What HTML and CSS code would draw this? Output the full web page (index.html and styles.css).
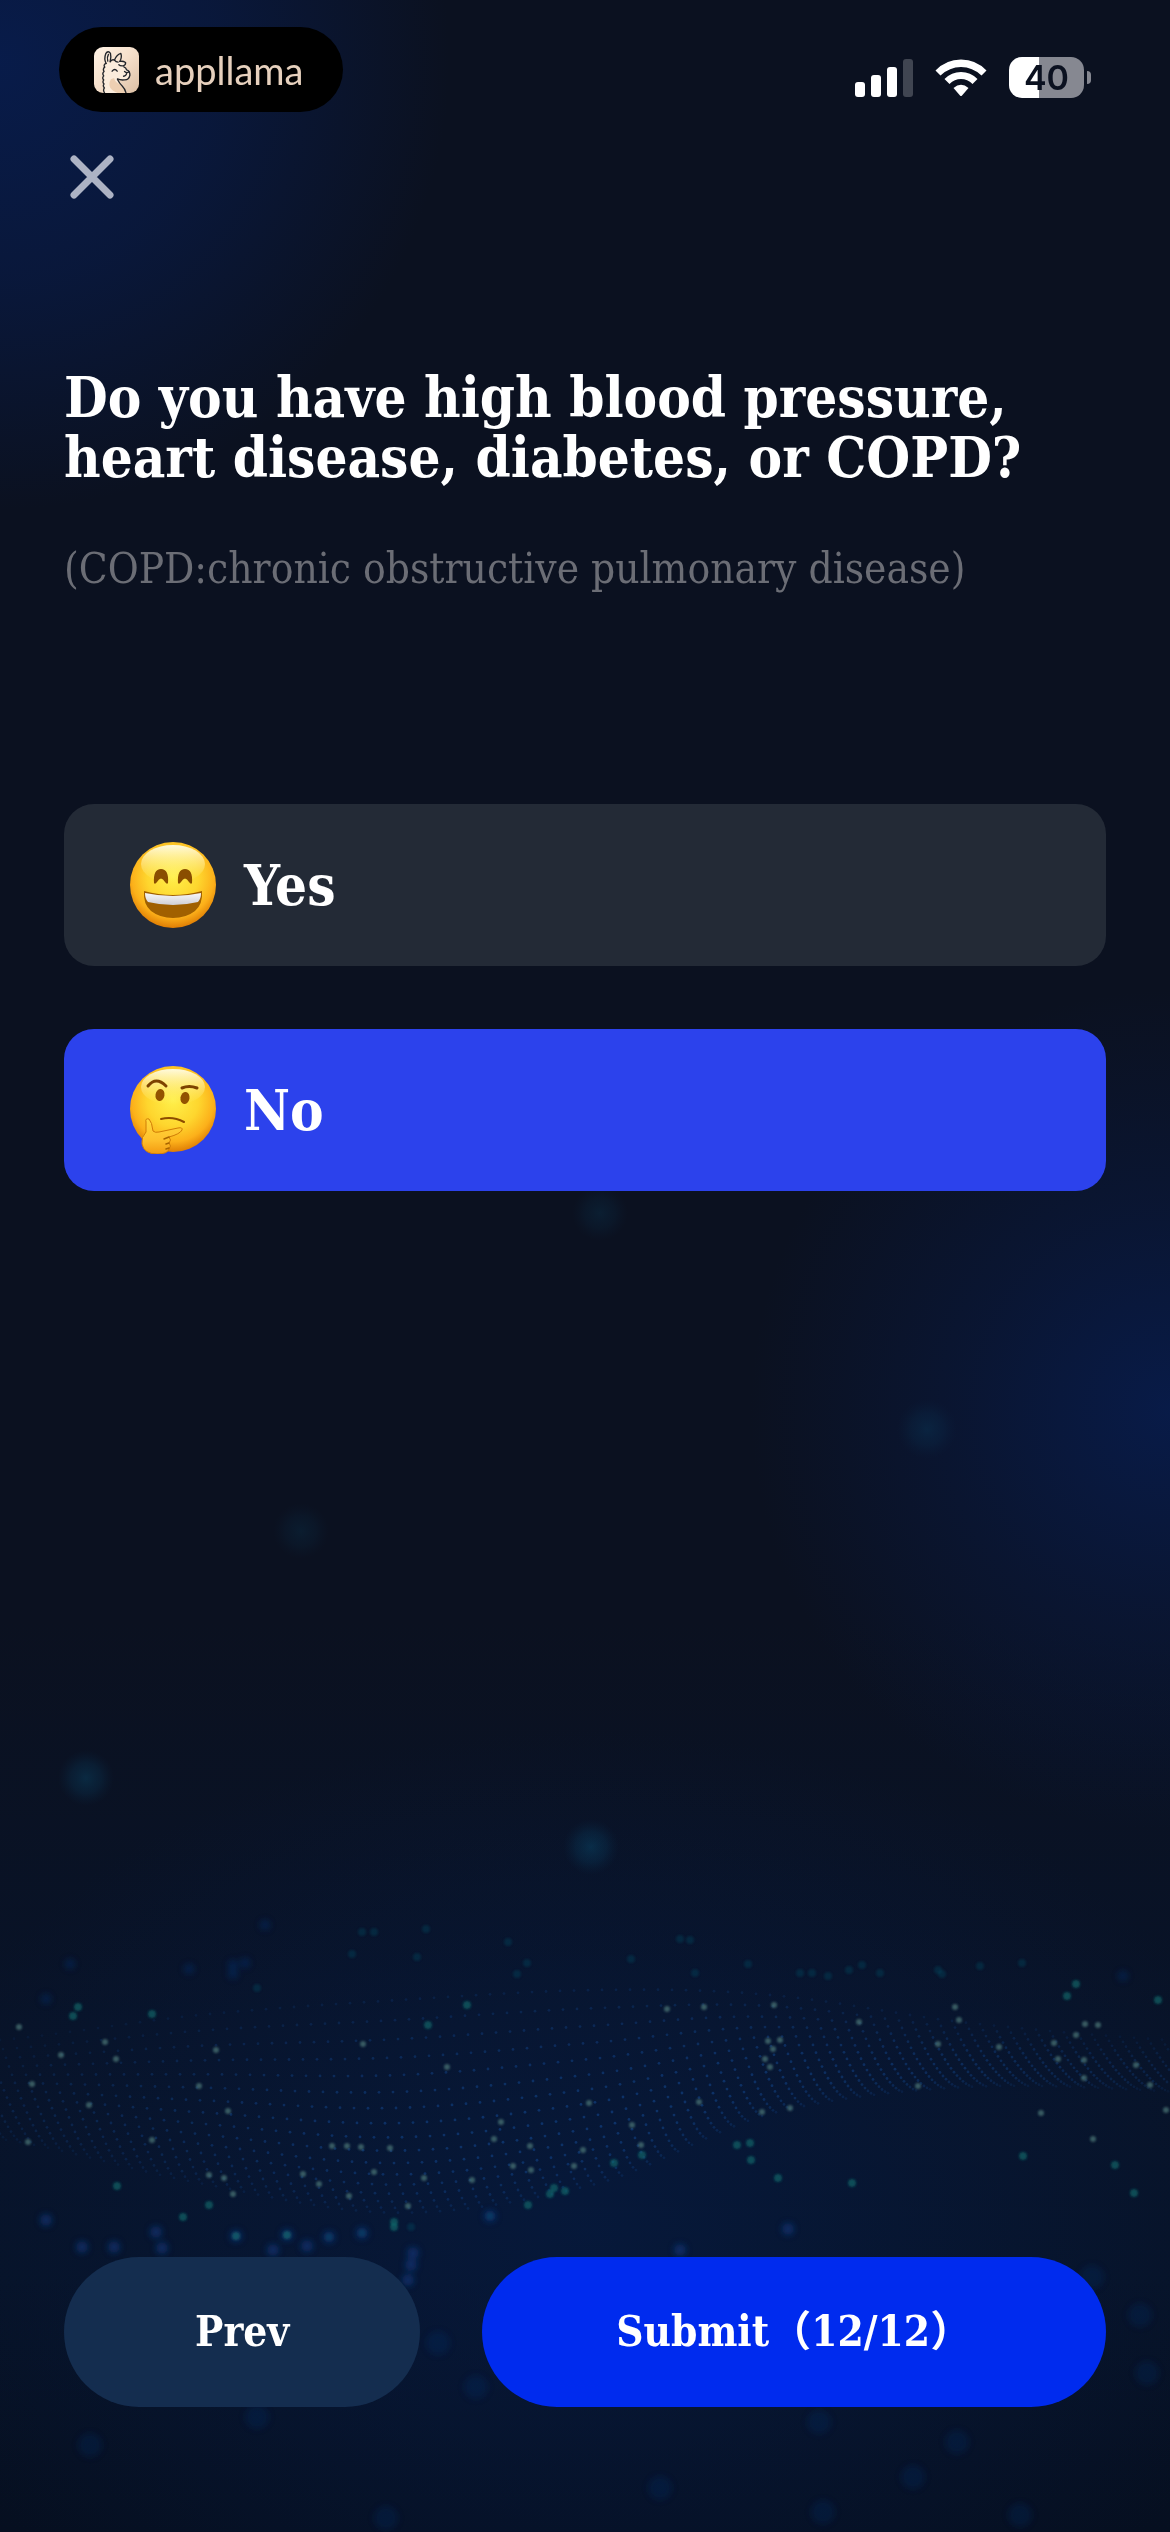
FILE: index.html
```
<!DOCTYPE html>
<html lang="en">
<head>
  <meta charset="UTF-8">
  <meta name="viewport" content="width=device-width, initial-scale=1">
  <title>Health Questions</title>
  <link rel="stylesheet" href="styles.css">
</head>
<body>

  <svg class="backdrop" viewBox="0 0 1170 2532" preserveAspectRatio="xMidYMax slice" aria-hidden="true">
    <defs>
      <radialGradient id="bokeh">
        <stop offset="0" stop-color="#0a5478" stop-opacity="0.8"/>
        <stop offset="0.55" stop-color="#0a4468" stop-opacity="0.5"/>
        <stop offset="1" stop-color="#0a3050" stop-opacity="0"/>
      </radialGradient>
      <filter id="soft" x="-10%" y="-10%" width="120%" height="120%">
        <feGaussianBlur stdDeviation="1.2"/>
      </filter>
      <filter id="softer" x="-10%" y="-10%" width="120%" height="120%">
        <feGaussianBlur stdDeviation="3"/>
      </filter>
    </defs>
    <g fill="url(#bokeh)">
      <circle cx="600" cy="1213" r="28" opacity="0.25"/>
      <circle cx="927" cy="1429" r="30" opacity="0.3"/>
      <circle cx="301" cy="1531" r="28" opacity="0.22"/>
      <circle cx="86" cy="1778" r="28" opacity="0.45"/>
      <circle cx="591" cy="1847" r="28" opacity="0.5"/>
    </g>
    <g id="mesh" fill="#1550a0"></g>
    <g id="blurs" fill="#0b3a86" filter="url(#softer)"></g>
    <g id="sparks" filter="url(#soft)"></g>
  </svg>

  <div class="screen">
    <header class="status-bar">
      <div class="brand">
        <svg class="brand-icon" viewBox="0 0 134 137" aria-hidden="true">
          <defs>
            <linearGradient id="tile" x1="0" y1="0" x2="1" y2="1">
              <stop offset="0" stop-color="#fff3e6"/>
              <stop offset="0.5" stop-color="#f5dfca"/>
              <stop offset="1" stop-color="#dcbfa4"/>
            </linearGradient>
          </defs>
          <rect width="134" height="137" rx="27" fill="url(#tile)"/>
          <path d="M36 50 L32 60 L28 72 L28 90 L30 137 H95 L84 113 L70 97 Q102 103 107 82 Q104 66 92 60 L94 48 L66 42 Z" fill="#fbecdc"/>
          <path d="M60 92 Q62 106 78 110 L96 137 H70 Q36 124 50 96Z" fill="#edcfb2"/>
          <g fill="none" stroke="#22252a" stroke-width="4" stroke-linecap="round" stroke-linejoin="round">
            <path d="M36 49 Q29 35 35 20 Q42 9 49 19 Q52 30 48 44"/>
            <path d="M41 42 Q38 30 43 22"/>
            <path d="M61 39 Q67 23 80 19 Q84 29 77 43"/>
            <path d="M49 43 Q54 36 61 39 Q65 45 72 45 M77 43 Q86 41 94 46 Q95 54 87 56 Q78 57 74 53"/>
            <path d="M89 59 Q96 62 97 68 Q107 71 107 84 Q104 99 90 98 Q78 99 70 95"/>
            <path d="M91 73 Q99 80 104 73 M97 79 Q96 86 88 87"/>
            <path d="M54 72 Q62 62 69 72"/>
            <path d="M70 97 Q76 109 84 116 Q92 124 95 136"/>
            <path d="M36 49 Q27 52 32 60 Q25 65 30 73 Q23 79 29 86 Q23 92 29 98 Q24 105 30 110 Q25 116 31 122 Q26 129 31 136"/>
          </g>
        </svg>
        <span class="brand-name">appllama</span>
      </div>

      <div class="indicators">
        <svg class="signal" viewBox="0 0 58 38" aria-hidden="true">
          <rect x="0" y="23" width="10" height="15" rx="3"/>
          <rect x="16" y="16" width="10" height="22" rx="3"/>
          <rect x="32" y="8" width="10" height="30" rx="3"/>
          <rect x="48" y="0" width="10" height="38" rx="3" opacity="0.22"/>
        </svg>
        <svg class="wifi" viewBox="0 0 52 38" aria-hidden="true">
          <path d="M0.5 11.5 Q11 0.5 26 0.5 Q41 0.5 51.5 11.5 L46.500 16.500 Q37.500 8 26 8 Q14.500 8 5.500 16.500 Z"/>
          <path d="M9.500 20 Q16.500 13 26 13 Q35.500 13 42.500 20 L37.500 25 Q32.500 20 26 20 Q19.500 20 14.500 25 Z"/>
          <path d="M18.500 29 Q26 22.500 33.500 29 L27 36.500 Q26 37.500 25 36.500 Z"/>
        </svg>
        <div class="battery"><span class="battery-level">40</span></div>
      </div>
    </header>

    <button class="close" type="button" aria-label="Close">
      <svg viewBox="0 0 44 44" aria-hidden="true"><path d="M4 4 L40 40 M40 4 L4 40"/></svg>
    </button>

    <form class="quiz">
      <h1>Do you have high blood pressure, heart disease, diabetes, or COPD?</h1>
      <p class="hint">(COPD:chronic obstructive pulmonary disease)</p>

      <div class="options">
        <label class="option">
          <input type="radio" name="condition" value="yes">
          <svg class="emoji" viewBox="0 0 86 88" aria-hidden="true">
            <defs>
              <radialGradient id="face" cx="0.5" cy="0.4" r="0.6">
                <stop offset="0" stop-color="#fff04a"/>
                <stop offset="0.5" stop-color="#fed62e"/>
                <stop offset="0.8" stop-color="#fcb01a"/>
                <stop offset="1" stop-color="#df7d04"/>
              </radialGradient>
              <linearGradient id="shine" x1="0" y1="0" x2="0" y2="1">
                <stop offset="0" stop-color="#fffde8" stop-opacity="0.95"/>
                <stop offset="1" stop-color="#fff37a" stop-opacity="0"/>
              </linearGradient>
              <linearGradient id="teeth" x1="0" y1="0" x2="0" y2="1">
                <stop offset="0" stop-color="#f8f8fa"/>
                <stop offset="1" stop-color="#cfcfd4"/>
              </linearGradient>
              <linearGradient id="hand" x1="0" y1="0" x2="0" y2="1">
                <stop offset="0" stop-color="#ffd83c"/>
                <stop offset="0.6" stop-color="#fec02c"/>
                <stop offset="1" stop-color="#f39a10"/>
              </linearGradient>
            </defs>
            <circle cx="43" cy="44" r="43" fill="url(#face)"/>
            <ellipse cx="43" cy="23" rx="32" ry="19" fill="url(#shine)"/>
            <path d="M24 42 Q23 28 31 28 Q39 28 38 42 Q37 44 35 41 Q31 34 27 41 Q25 44 24 42Z M48 42 Q47 28 55 28 Q63 28 62 42 Q61 44 59 41 Q55 34 51 41 Q49 44 48 42Z" fill="#8a4e00"/>
            <path d="M14 50 Q43 58 72 50 Q73 63 65 70 Q56 77 43 77 Q30 77 21 70 Q13 63 14 50Z" fill="#a06000"/>
            <path d="M15 52 Q43 58 71 52 Q71 58 68 61 Q43 67 18 61 Q15 58 15 52Z" fill="url(#teeth)"/>
          </svg>
          <span>Yes</span>
        </label>

        <label class="option">
          <input type="radio" name="condition" value="no" checked>
          <svg class="emoji" viewBox="0 0 86 88" aria-hidden="true">
            <ellipse cx="43" cy="43" rx="43" ry="43" fill="url(#face)"/>
            <ellipse cx="43" cy="21" rx="32" ry="18" fill="url(#shine)"/>
            <path d="M18 20 Q26 10 36 20 M52 22 Q59 19 67 22" fill="none" stroke="#7d4300" stroke-width="3" stroke-linecap="round"/>
            <ellipse cx="30" cy="29" rx="4.500" ry="6" transform="rotate(10 30 29)" fill="#935300"/>
            <ellipse cx="55" cy="32" rx="4.500" ry="6" transform="rotate(10 55 32)" fill="#935300"/>
            <path d="M31 53 Q43 50 54 56" fill="none" stroke="#8c4c00" stroke-width="2" stroke-linecap="round"/>
            <path d="M16 56 Q15 52 19 53 Q22 56 23 65 Q25 67 29 66 L48 62 Q53 61 52 64 Q50 68 39 71 Q42 74 39 77 Q42 80 39 83 Q38 88 27 88 Q14 88 12 78 Q11 71 16 66Z" fill="url(#hand)" stroke="#d07c06" stroke-width="1"/>
            <path d="M39 71 L34 73 M39 77 L36 78 M39 82 L36 83" fill="none" stroke="#a86400" stroke-width="1.500" stroke-linecap="round"/>
          </svg>
          <span>No</span>
        </label>
      </div>

      <div class="actions">
        <button class="btn btn-prev" type="button">Prev</button>
        <button class="btn btn-submit" type="submit">Submit（12/12）</button>
      </div>
    </form>
  </div>

  <script src="script.js"></script>
</body>
</html>
```
FILE: styles.css
```
* {
  box-sizing: border-box;
}

body {
  margin: 0;
  background-color: #0b1120;
  color: #fff;
  font-family: "DejaVu Serif Condensed", "DejaVu Serif", "Noto Sans CJK SC", serif;
}

button {
  border: none;
  font-family: inherit;
  color: inherit;
  cursor: pointer;
}

.backdrop {
  position: absolute;
  top: 0;
  left: 0;
  width: 100%;
  height: 100%;
  background:
    radial-gradient(circle at 0 60px, rgba(8, 28, 76, 0.95), rgba(8, 28, 76, 0.6) 220px, rgba(8, 28, 76, 0) 450px),
    radial-gradient(circle at 100% 1410px, rgba(8, 28, 76, 0.9), rgba(8, 28, 76, 0.4) 210px, rgba(8, 28, 76, 0) 420px),
    radial-gradient(ellipse 60% 500px at 50% 2230px, rgba(6, 28, 70, 0.6), rgba(6, 28, 70, 0)),
    linear-gradient(#0b1120 64%, #081328 80%, #071328 90%, #060f20);
}

.screen {
  position: relative;
  display: flex;
  flex-direction: column;
  min-height: 100vh;
}

/* status bar */

.status-bar {
  display: flex;
  justify-content: space-between;
  align-items: flex-end;
  padding: 27px 86px 0 59px;
}

.brand {
  display: flex;
  align-items: center;
  gap: 16px;
  height: 85px;
  padding: 0 40px 0 35px;
  border-radius: 43px;
  background-color: #000;
}

.brand-icon {
  width: 45px;
  height: 46px;
}

.brand-name {
  font-family: Lato, sans-serif;
  font-size: 38px;
  line-height: 40px;
  color: #e6d0bd;
}

.indicators {
  display: flex;
  align-items: center;
  gap: 22px;
  padding-bottom: 14px;
}

.signal,
.wifi {
  height: 38px;
  fill: #fff;
}

.signal {
  width: 58px;
}

.wifi {
  width: 52px;
}

.battery {
  position: relative;
  width: 75px;
  height: 41px;
  border-radius: 13px;
  background: linear-gradient(90deg, #fff 40%, #868891 40%);
  text-align: center;
}

/* battery tip */
.battery::after {
  content: "";
  position: absolute;
  top: 14px;
  right: -7px;
  width: 4px;
  height: 13px;
  border-radius: 0 4px 4px 0;
  background-color: #868891;
}

.battery-level {
  font-family: Inter, sans-serif;
  font-size: 34px;
  font-weight: 600;
  line-height: 41px;
  color: #0b1120;
}

.close {
  align-self: flex-start;
  margin: 43px 0 0 70px;
  padding: 0;
  background: none;
}

.close svg {
  display: block;
  width: 44px;
  height: 44px;
  fill: none;
  stroke: #adb3c4;
  stroke-width: 7;
  stroke-linecap: round;
}

/* question */

.quiz {
  flex: 1;
  display: flex;
  flex-direction: column;
  padding: 168px 64px 125px;
}

h1 {
  margin: 0;
  font-size: 56px;
  line-height: 60px;
}

.hint {
  margin: 52px 0 0;
  font-size: 42px;
  line-height: 60px;
  color: #6b6d75;
}

.options {
  display: flex;
  flex-direction: column;
  gap: 63px;
  margin-top: 205px;
}

.option {
  display: flex;
  align-items: center;
  gap: 28px;
  height: 162px;
  padding: 0 66px;
  border-radius: 30px;
  background-color: #232a36;
  font-size: 56px;
  font-weight: 700;
  cursor: pointer;
}

.option input {
  position: absolute;
  opacity: 0;
}

.option:has(input:checked) {
  background-color: #2c42ec;
}

.emoji {
  width: 86px;
  height: 88px;
}

/* footer buttons */

.actions {
  display: grid;
  grid-template-columns: 4fr 7fr;
  gap: 62px;
  margin-top: auto;
}

.btn {
  height: 150px;
  padding: 0;
  border-radius: 75px;
  font-size: 42px;
  font-weight: 700;
  line-height: 60px;
}

.btn-prev {
  background-color: #142d4f;
}

.btn-submit {
  background-color: #002bee;
}
```
FILE: script.js
```
const svgNS = "http://www.w3.org/2000/svg";

function addDot(parent, x, y, r, opacity, fill) {
  const dot = document.createElementNS(svgNS, "ellipse");
  dot.setAttribute("cx", x);
  dot.setAttribute("cy", y);
  dot.setAttribute("rx", r);
  dot.setAttribute("ry", r);
  dot.setAttribute("opacity", opacity);
  if (fill) dot.setAttribute("fill", fill);
  document.getElementById(parent).appendChild(dot);
}

// wave surface: upper and lower edge at each column
const columns = [
  [-200, 2050, 2125], [0, 2040, 2140], [200, 2015, 2185], [400, 2000, 2215],
  [600, 1990, 2185], [770, 1995, 2115], [960, 2022, 2088], [1170, 2040, 2092], [1370, 2045, 2110]
];

function edge(x, index) {
  let i = 1;
  while (i < columns.length - 3 && x > columns[i + 1][0]) i++;
  const t = (x - columns[i][0]) / (columns[i + 1][0] - columns[i][0]);
  const [a, b, c, d] = [-1, 0, 1, 2].map(n => columns[i + n][index]);
  return 0.5 * (2 * b + (c - a) * t + (2 * a - 5 * b + 4 * c - d) * t * t + (3 * b - a - 3 * c + d) * t * t * t);
}

const rows = 17;
for (let row = 0; row < rows; row++) {
  const depth = 1 - Math.pow(1 - row / rows, 1.6);
  for (let x = (row * 3) % 14; x < 1170; x += 14) {
    const top = edge(x, 1);
    const y = top + (edge(x, 2) - top) * depth;
    const light = Math.sin(Math.PI * (row + 2) / (rows + 3));
    // the surface fades towards both sides
    const side = 0.5 + 0.5 * Math.sin(Math.PI * x / 1170);
    addDot("mesh", x, y, 1.4, (0.08 + 0.4 * light) * side);
  }
}

const pale = [
  [19, 2027], [61, 2055], [105, 2042], [116, 2059], [216, 2050], [199, 2086], [228, 2111], [32, 2084],
  [89, 2105], [28, 2142], [152, 2140], [332, 2146], [347, 2146], [361, 2147], [390, 2148], [209, 2175],
  [224, 2178], [233, 2194], [303, 2174], [319, 2184], [349, 2196], [374, 2172], [408, 2206], [424, 2178],
  [472, 2180], [363, 2044], [447, 2067], [501, 2122], [494, 2139], [530, 2146], [513, 2166], [531, 2170],
  [574, 2166], [583, 2150], [667, 2009], [704, 2007], [774, 2005], [859, 2022], [768, 2041], [780, 2040],
  [773, 2049], [765, 2059], [770, 2067], [955, 2007], [959, 2020], [938, 2044], [999, 2047], [918, 2086],
  [1085, 2024], [1098, 2025], [1076, 2035], [1054, 2043], [1058, 2059], [1084, 2060], [1084, 2078],
  [1136, 2065], [1150, 2085], [1166, 2110], [1041, 2113], [1093, 2139], [589, 2103], [632, 2125],
  [641, 2145], [699, 2102], [762, 2112], [790, 2108]
];

const teal = [
  [152, 2014], [73, 2016], [78, 2007], [209, 2205], [117, 2186], [183, 2217], [428, 2025], [467, 2005],
  [554, 2188], [550, 2194], [565, 2191], [528, 2205], [394, 2222], [394, 2227], [642, 2155], [614, 2163],
  [737, 2145], [750, 2143], [751, 2160], [778, 2178], [852, 2183], [1023, 2156], [1115, 2165],
  [1134, 2193], [1076, 1984], [1067, 1996], [1158, 2000], [236, 2236], [287, 2235]
];

const faint = [
  [527, 1963], [517, 1974], [257, 1988], [631, 1959], [695, 1973], [748, 1964], [680, 1939], [690, 1940],
  [800, 1973], [812, 1973], [828, 1976], [849, 1970], [862, 1965], [880, 1973], [938, 1970], [942, 1974],
  [980, 1966], [1022, 1963], [352, 1954], [362, 1932], [374, 1932], [426, 1929], [417, 1957], [508, 1942],
  [490, 2216], [411, 2227], [329, 2237], [362, 2233]
];

const blue = [
  [46, 2220], [156, 2232], [162, 2248], [82, 2247], [114, 2247], [307, 2246], [273, 2250], [413, 2253],
  [411, 2265], [408, 2280], [329, 2237], [362, 2233], [490, 2216], [788, 2229], [680, 2250],
  [236, 2236], [287, 2235]
];

const dim = [
  [233, 1974], [233, 1965], [245, 1963], [189, 1969], [46, 1999], [70, 1964], [1123, 1976], [265, 1925]
];

const deep = [
  [438, 2343], [476, 2387], [819, 2422], [913, 2477], [957, 2442], [660, 2488], [386, 2518], [90, 2445],
  [257, 2417], [823, 2512], [1092, 2277], [1140, 2315], [1147, 2373], [1020, 2515]
];

pale.forEach(([x, y]) => addDot("sparks", x, y, 3, 0.7, "#4d7878"));
teal.forEach(([x, y]) => addDot("sparks", x, y, 4, 0.6, "#0d7070"));
faint.forEach(([x, y]) => addDot("sparks", x, y, 4, 0.3, "#0d566c"));
blue.forEach(([x, y]) => addDot("blurs", x, y, 6, 0.6));
dim.forEach(([x, y]) => addDot("blurs", x, y, 5, 0.35));
deep.forEach(([x, y]) => addDot("blurs", x, y, 12, 0.18));
```
